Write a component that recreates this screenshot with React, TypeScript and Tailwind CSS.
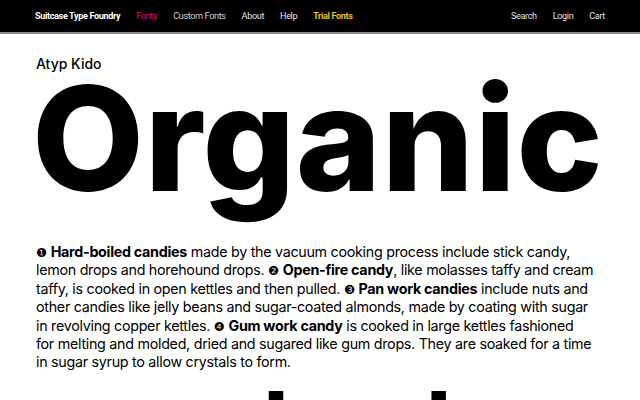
const navLeft = [
  { label: 'Fonts', className: 'text-[#e0157f]' },
  { label: 'Custom Fonts', className: 'text-[#cfcfcf]' },
  { label: 'About', className: 'text-[#e6e6e6]' },
  { label: 'Help', className: 'text-[#e6e6e6]' },
  { label: 'Trial Fonts', className: 'text-[#f0cc2a] font-semibold' },
]

const navRight = ['Search', 'Login', 'Cart']

function Num({ n }: { n: string }) {
  return <span className="font-['DejaVu_Sans',sans-serif] text-[12.5px] leading-none">{n}</span>
}

export default function App() {
  return (
    <div className="h-[400px] overflow-hidden bg-white text-black font-['Inter',sans-serif]">
      {/* ── Nav ── */}
      <nav className="h-[34px] bg-black border-b-2 border-[#8a8a8a] flex items-center justify-between px-[35px] pt-[1px] font-['Roboto',sans-serif] text-[9.1px] tracking-[-0.04em]">
        <div className="flex items-center gap-[16px]">
          <span className="font-bold text-white">Suitcase Type Foundry</span>
          {navLeft.map(l => (
            <a key={l.label} className={l.className}>{l.label}</a>
          ))}
        </div>
        <div className="flex items-center gap-[16px] text-[#e0e0e0]">
          {navRight.map(l => <a key={l}>{l}</a>)}
        </div>
      </nav>

      {/* ── Specimen ── */}
      <main className="px-[36px]">
        <h2 className="pt-[23px] text-[14px] font-medium leading-none">Atyp Kido</h2>
        <h1 className="mt-[8px] text-[145px] font-extrabold leading-[120px] tracking-[0.005em] -ml-[4px]">Organic</h1>

        <p className="mt-[44px] text-[14.3px] leading-[18.4px] whitespace-nowrap tracking-[-0.02em]">
          <Num n="❶" /> <b>Hard-boiled candies</b> made by the vacuum cooking process include stick candy,<br />
          lemon drops and horehound drops. <Num n="❷" /> <b>Open-fire candy</b>, like molasses taffy and cream<br />
          taffy, is cooked in open kettles and then pulled. <Num n="❸" /> <b>Pan work candies</b> include nuts and<br />
          other candies like jelly beans and sugar-coated almonds, made by coating with sugar<br />
          in revolving copper kettles. <Num n="❹" /> <b>Gum work candy</b> is cooked in large kettles fashioned<br />
          for melting and molded, dried and sugared like gum drops. They are soaked for a time<br />
          in sugar syrup to allow crystals to form.
        </p>

        <div className="mt-[8px] -ml-[7px] text-[135px] font-medium leading-[120px]">sealed</div>
      </main>
    </div>
  )
}
